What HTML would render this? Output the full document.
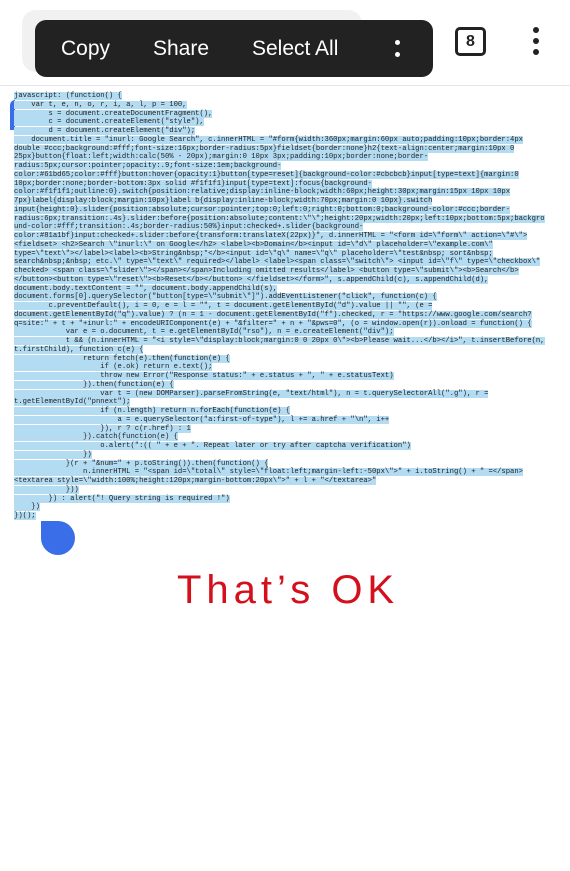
<!DOCTYPE html>
<html><head><meta charset="utf-8"><style>
body{margin:0;width:570px;height:871px;background:#fff;position:relative;overflow:hidden;font-family:"Liberation Sans",sans-serif}
.bg{position:absolute;left:22px;top:10px;width:340px;height:62px;background:#f1f1f1;border-radius:14px}
.bar{position:absolute;left:35px;top:20px;width:398px;height:57px;background:#222;border-radius:11px;color:#fff;font-size:21px}
.bar span{position:absolute;top:17px}
.line{position:absolute;left:0;top:85px;width:570px;height:1px;background:#e6e6e6}
.tab{position:absolute;left:455px;top:27px;width:25px;height:23px;border:3.5px solid #222;border-radius:5px;font-weight:bold;font-size:16px;text-align:center;line-height:23px;color:#222}
.dot{position:absolute;width:6px;height:6px;border-radius:50%;background:#222}
pre{position:absolute;left:14px;top:92px;margin:0;font-family:"Liberation Mono",monospace;font-size:7.2px;line-height:8.75px;color:#222;white-space:pre}
pre span{background:#b3dcf3}
.ok{position:absolute;left:177px;top:568px;font-family:"Liberation Sans",sans-serif;font-size:40px;color:#d3101c;letter-spacing:5px}
</style></head><body>
<div class="bg"></div>
<div class="bar"><span style="left:26px">Copy</span><span style="left:118px">Share</span><span style="left:217px">Select All</span>
<div class="dot" style="left:360px;top:20px;width:5px;height:5px;background:#fff"></div><div class="dot" style="left:360px;top:32px;width:5px;height:5px;background:#fff"></div></div>
<div class="tab">8</div>
<div class="dot" style="left:533px;top:27px"></div><div class="dot" style="left:533px;top:38px"></div><div class="dot" style="left:533px;top:49px"></div>
<div class="line"></div>
<div style="position:absolute;left:10px;top:100px;width:5px;height:30px;background:#3a6ee8;border-radius:5px 0 0 0"></div>
<pre><span>javascript: (function() {
    var t, e, n, o, r, i, a, l, p = 100,
        s = document.createDocumentFragment(),
        c = document.createElement("style"),
        d = document.createElement("div");
    document.title = "inurl: Google Search", c.innerHTML = "#form{width:360px;margin:60px auto;padding:10px;border:4px
double #ccc;background:#fff;font-size:16px;border-radius:5px}fieldset{border:none}h2{text-align:center;margin:10px 0
25px}button{float:left;width:calc(50% - 20px);margin:0 10px 3px;padding:10px;border:none;border-
radius:5px;cursor:pointer;opacity:.9;font-size:1em;background-
color:#61bd65;color:#fff}button:hover{opacity:1}button[type=reset]{background-color:#cbcbcb}input[type=text]{margin:0
10px;border:none;border-bottom:3px solid #f1f1f1}input[type=text]:focus{background-
color:#f1f1f1;outline:0}.switch{position:relative;display:inline-block;width:60px;height:30px;margin:15px 10px 10px
7px}label{display:block;margin:10px}label b{display:inline-block;width:70px;margin:0 10px}.switch
input{height:0}.slider{position:absolute;cursor:pointer;top:0;left:0;right:0;bottom:0;background-color:#ccc;border-
radius:6px;transition:.4s}.slider:before{position:absolute;content:\"\";height:20px;width:20px;left:10px;bottom:5px;backgro
und-color:#fff;transition:.4s;border-radius:50%}input:checked+.slider{background-
color:#81a1bf}input:checked+.slider:before{transform:translateX(22px)}", d.innerHTML = "&lt;form id=\"form\" action=\"#\"&gt;
&lt;fieldset&gt; &lt;h2&gt;Search \"inurl:\" on Google&lt;/h2&gt; &lt;label&gt;&lt;b&gt;Domain&lt;/b&gt;&lt;input id=\"d\" placeholder=\"example.com\"
type=\"text\"&gt;&lt;/label&gt;&lt;label&gt;&lt;b&gt;String&amp;nbsp;*&lt;/b&gt;&lt;input id=\"q\" name=\"q\" placeholder=\"test&amp;nbsp; sort&amp;nbsp;
search&amp;nbsp;&amp;nbsp; etc.\" type=\"text\" required&gt;&lt;/label&gt; &lt;label&gt;&lt;span class=\"switch\"&gt; &lt;input id=\"f\" type=\"checkbox\"
checked&gt; &lt;span class=\"slider\"&gt;&lt;/span&gt;&lt;/span&gt;Including omitted results&lt;/label&gt; &lt;button type=\"submit\"&gt;&lt;b&gt;Search&lt;/b&gt;
&lt;/button&gt;&lt;button type=\"reset\"&gt;&lt;b&gt;Reset&lt;/b&gt;&lt;/button&gt; &lt;/fieldset&gt;&lt;/form&gt;", s.appendChild(c), s.appendChild(d),
document.body.textContent = "", document.body.appendChild(s),
document.forms[0].querySelector("button[type=\"submit\"]").addEventListener("click", function(c) {
        c.preventDefault(), i = 0, e = l = "", t = document.getElementById("d").value || "", (e =
document.getElementById("q").value) ? (n = 1 - document.getElementById("f").checked, r = "https://www.google.com/search?
q=site:" + t + "+inurl:" + encodeURIComponent(e) + "&amp;filter=" + n + "&amp;pws=0", (o = window.open(r)).onload = function() {
            var e = o.document, t = e.getElementById("rso"), n = e.createElement("div");
            t &amp;&amp; (n.innerHTML = "&lt;i style=\"display:block;margin:0 0 20px 0\"&gt;&lt;b&gt;Please wait...&lt;/b&gt;&lt;/i&gt;", t.insertBefore(n,
t.firstChild), function c(e) {
                return fetch(e).then(function(e) {
                    if (e.ok) return e.text();
                    throw new Error("Response status:" + e.status + ", " + e.statusText)
                }).then(function(e) {
                    var t = (new DOMParser).parseFromString(e, "text/html"), n = t.querySelectorAll(".g"), r =
t.getElementById("pnnext");
                    if (n.length) return n.forEach(function(e) {
                        a = e.querySelector("a:first-of-type"), l += a.href + "\n", i++
                    }), r ? c(r.href) : 1
                }).catch(function(e) {
                    o.alert(":(( " + e + ". Repeat later or try after captcha verification")
                })
            }(r + "&amp;num=" + p.toString()).then(function() {
                n.innerHTML = "&lt;span id=\"total\" style=\"float:left;margin-left:-50px\"&gt;" + i.toString() + " =&lt;/span&gt;
&lt;textarea style=\"width:100%;height:120px;margin-bottom:20px\"&gt;" + l + "&lt;/textarea&gt;"
            }))
        }) : alert("! Query string is required !")
    })
})();</span></pre>
<div style="position:absolute;left:41px;top:521px;width:34px;height:34px;background:#3a6ee8;border-radius:0 50% 50% 50%"></div>
<div class="ok">That’s OK</div>
</body></html>
